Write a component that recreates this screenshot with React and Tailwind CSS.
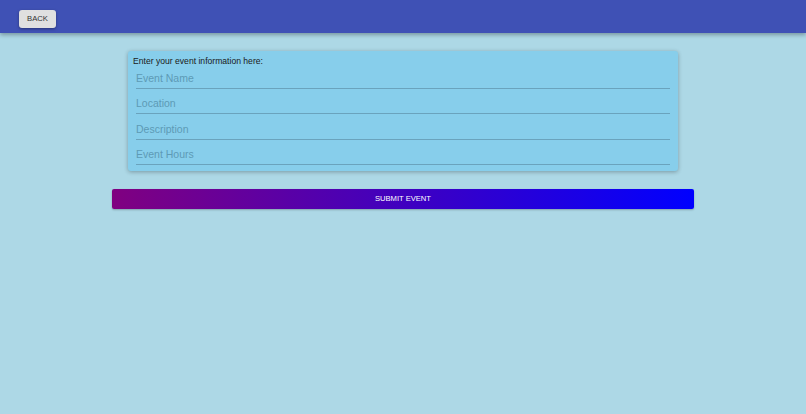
export default function App() {
  const fields = ["Location", "Description", "Event Hours"];
  return (
    <div className="min-h-[414px] w-full bg-[#ADD8E6]" style={{ fontFamily: "'Liberation Sans', Arial, sans-serif" }}>
      <div className="h-[33px] bg-[#3F51B5] shadow-[0_2px_4px_rgba(0,0,0,0.3)] flex items-start pt-[10px] pl-[19px]">
        <button className="h-[18px] w-[37px] rounded-[3px] bg-[#e0e0e0] text-[7.7px] text-[#333] shadow-[0_1px_3px_rgba(0,0,0,0.35)] flex items-center justify-center">
          BACK
        </button>
      </div>
      <div className="flex flex-col items-center pt-[18px]">
        <div className="w-[550px] bg-[#87CEEB] rounded-[3px] shadow-[0_1px_4px_rgba(0,0,0,0.3)] pt-[4px] pb-[6px]">
          <div className="h-[12px] pl-[5px] text-[8.6px] leading-[12px] text-[#1a1a1a]">Enter your event information here:</div>
          <div className="mx-[8px]">
            <div className="h-[22px] border-b border-[#6aa3bd] flex items-end pb-[3px] text-[10.5px] leading-[13px] text-[#5d9ab5]">Event Name</div>
            {fields.map((f) => (
              <div key={f} className="h-[25.4px] border-b border-[#6aa3bd] flex items-end pb-[3px] text-[10.5px] leading-[13px] text-[#5d9ab5]">{f}</div>
            ))}
          </div>
        </div>
        <button className="mt-[18px] w-[582px] h-[20px] rounded-[2px] bg-[linear-gradient(to_right,#800080,#0000ff)] text-white text-[7.6px] shadow-[0_1px_2px_rgba(0,0,0,0.25)] flex items-center justify-center">
          SUBMIT EVENT
        </button>
      </div>
    </div>
  );
}
